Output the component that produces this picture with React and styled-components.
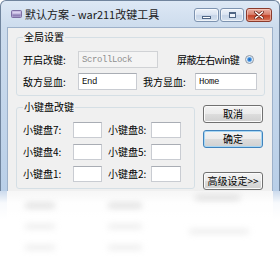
import React from "react"
import styled, { createGlobalStyle } from "styled-components"

const GlobalStyle = createGlobalStyle`
  html, body {
    margin: 0;
    padding: 0;
    background: #fff;
  }
  body {
    width: 280px;
    height: 270px;
    overflow: hidden;
    font-family: "Noto Sans CJK SC", "Liberation Sans", sans-serif;
  }
`

const AppIcon = () => (
  <svg width="11" height="10" viewBox="0 0 11 10">
    <rect x="0.5" y="1.5" width="10" height="7" rx="1" fill="#b7a9d6" stroke="#7d6fa3" />
    <rect x="1.5" y="2.5" width="8" height="2" fill="#d9d1ee" />
    <rect x="1.5" y="5.5" width="8" height="2" fill="#8d80b3" />
  </svg>
)

const Keypad = [
  ["小键盘7:", "小键盘8:"],
  ["小键盘4:", "小键盘5:"],
  ["小键盘1:", "小键盘2:"],
]

const App = () => {
  return (
    <Page>
      <GlobalStyle />
      <Window>
        <TitleBar>
          <AppIcon />
          <Title>默认方案 - war211改键工具</Title>
          <CaptionButtons>
            <CaptionButton w={25}>
              <MinGlyph />
            </CaptionButton>
            <CaptionButton w={24}>
              <MaxGlyph />
            </CaptionButton>
            <CloseButton>
              <svg width="10" height="8" viewBox="0 0 10 8">
                <path d="M1.5 1 L8.5 7 M8.5 1 L1.5 7" stroke="#6b2418" strokeWidth="3" strokeLinecap="round" />
                <path d="M1.5 1 L8.5 7 M8.5 1 L1.5 7" stroke="#fff" strokeWidth="1.6" strokeLinecap="round" />
              </svg>
            </CloseButton>
          </CaptionButtons>
        </TitleBar>

        <Client>
          <GlobalGroup>
            <Legend>全局设置</Legend>
            <Row>
              <Label w={55}>开启改键:</Label>
              <TextBox w={80} value="ScrollLock" disabled readOnly />
              <Label tight style={{ marginLeft: 19 }}>屏蔽左右win键</Label>
              <Radio />
            </Row>
            <Row>
              <Label w={55}>敌方显血:</Label>
              <TextBox w={59} value="End" readOnly />
              <Label w={52} style={{ marginLeft: 6 }}>我方显血:</Label>
              <TextBox w={62} value="Home" readOnly />
            </Row>
          </GlobalGroup>

          <BottomRow>
            <KeypadGroup>
              <Legend>小键盘改键</Legend>
              <KeyGrid>
                {Keypad.map(([a, b]) => (
                  <React.Fragment key={a}>
                    <Label>{a}</Label>
                    <TextBox w={29} h={16} readOnly value="" />
                    <Label>{b}</Label>
                    <TextBox w={30} h={16} readOnly value="" />
                  </React.Fragment>
                ))}
              </KeyGrid>
            </KeypadGroup>

            <ButtonColumn>
              <Button>取消</Button>
              <Button focused>确定</Button>
              <Button style={{ marginTop: 17 }}>高级设定&gt;&gt;</Button>
            </ButtonColumn>
          </BottomRow>
        </Client>
      </Window>

      <Fade>
        <Ghost />
        <Ghost />
        <Ghost style={{ marginTop: -8 }} />
        <Ghost faint />
        <Ghost faint />
        <span />
        <Ghost faint />
        <Ghost faint />
        <Ghost faint style={{ marginTop: -16, width: 60, marginLeft: -6 }} />
      </Fade>
    </Page>
  )
}

export default App

const Page = styled.div`
  width: 280px;
  height: 270px;
  display: flex;
  flex-direction: column;
  overflow: hidden;
`

const Window = styled.div`
  height: 191px;
  flex-shrink: 0;
  box-sizing: border-box;
  display: flex;
  flex-direction: column;
  border: 1px solid #70849d;
  border-bottom: none;
  border-radius: 6px 6px 0 0;
  background: linear-gradient(to bottom, #dde8f5 0, #cddced 26px, #b9cfe8 100%);
  overflow: hidden;
`

const TitleBar = styled.div`
  height: 26px;
  flex-shrink: 0;
  display: flex;
  align-items: center;
  padding: 0 7px 0 10px;
`

const Title = styled.div`
  margin-left: 3px;
  font-size: 11px;
  line-height: 12px;
  color: #1a1a1a;
  white-space: nowrap;
`

const CaptionButtons = styled.div`
  margin-left: auto;
  align-self: flex-start;
  margin-top: 7px;
  display: flex;
  gap: 1px;
`

const CaptionButton = styled.div`
  width: ${(p) => p.w}px;
  height: 14px;
  box-sizing: border-box;
  border: 1px solid #7d93b0;
  border-radius: 3px;
  background: linear-gradient(to bottom, #edf2f9 0%, #dbe5f2 45%, #c6d5e8 55%, #d5e1ef 100%);
  box-shadow: inset 0 0 0 1px rgba(255, 255, 255, 0.6);
  display: flex;
  align-items: center;
  justify-content: center;
`

const CloseButton = styled(CaptionButton).attrs({ w: 26 })`
  margin-left: 1px;
  border-color: #8a3a2c;
  background: linear-gradient(to bottom, #eab0a4 0%, #d9826f 45%, #c4452b 55%, #d77a5c 100%);
  box-shadow: inset 0 0 0 1px rgba(255, 220, 210, 0.5);
`

const MinGlyph = styled.div`
  width: 9px;
  height: 3px;
  margin-top: 4px;
  box-sizing: border-box;
  border: 1px solid #4f6685;
  background: #fff;
`

const MaxGlyph = styled.div`
  width: 7px;
  height: 6px;
  box-sizing: border-box;
  border: 1px solid #4f6685;
  border-top-width: 2px;
  background: #eef3fa;
`

const Client = styled.div`
  flex: 1;
  margin: 0 6px;
  box-sizing: border-box;
  border: 1px solid #9db1ca;
  border-bottom: none;
  background: #f0f0f0;
  display: flex;
  flex-direction: column;
`

const Group = styled.fieldset`
  margin: 0;
  min-width: 0;
  box-sizing: border-box;
  border: 1px solid #d5dfe5;
  border-radius: 3px;
  padding: 0 0 0 6px;
`

const GlobalGroup = styled(Group)`
  margin: 3px 7px 0 8px;
  padding-top: 8px;
  padding-bottom: 5px;
  display: flex;
  flex-direction: column;
  gap: 5px;
`

const KeypadGroup = styled(Group)`
  width: 179px;
  margin-left: 8px;
  padding-top: 9px;
  padding-bottom: 6px;
`

const Legend = styled.legend`
  padding: 0 1px;
  font-size: 10px;
  line-height: 12px;
  color: #000;
`

const Row = styled.div`
  display: flex;
  align-items: center;
  height: 17px;
`

const Label = styled.div`
  width: ${(p) => (p.w ? `${p.w}px` : "auto")};
  flex-shrink: 0;
  font-size: 10px;
  line-height: 16px;
  letter-spacing: ${(p) => (p.tight ? "-0.6px" : "0")};
  color: #000;
  white-space: nowrap;
`

const TextBox = styled.input`
  width: ${(p) => p.w}px;
  height: ${(p) => p.h || 17}px;
  box-sizing: border-box;
  margin: 0;
  padding: 0 3px;
  border: 1px solid #c9ccd2;
  border-top-color: #a9adb4;
  border-radius: 0;
  background: #fff;
  font-family: "Liberation Mono", monospace;
  font-size: 9px;
  letter-spacing: -0.4px;
  color: #111;
  outline: none;

  &:disabled {
    background: #f4f4f4;
    border-color: #d0d2d5;
    color: #8f8f8f;
  }
`

const Radio = styled.div`
  width: 9px;
  height: 9px;
  margin-left: 6px;
  box-sizing: border-box;
  border-radius: 50%;
  border: 1px solid #8d99a7;
  background: radial-gradient(circle, #1565c0 0, #3f8ddc 1.6px, #9cc7ee 2.4px, #e6edf5 3px);
`

const BottomRow = styled.div`
  margin-top: 5px;
  display: flex;
  align-items: flex-start;
`

const KeyGrid = styled.div`
  display: grid;
  grid-template-columns: 50px 29px 49px 30px;
  column-gap: 0;
  row-gap: 6px;
  align-items: center;

  & > :nth-child(4n + 3) {
    margin-left: 6px;
    width: 43px;
  }
`

const ButtonColumn = styled.div`
  width: 60px;
  margin-left: 8px;
  padding-top: 4px;
  display: flex;
  flex-direction: column;
  gap: 7px;
`

const Button = styled.button`
  width: 60px;
  height: 18px;
  padding: 0;
  box-sizing: border-box;
  border: 1px solid ${(p) => (p.focused ? "#3f83bd" : "#707070")};
  border-radius: 3px;
  background: linear-gradient(to bottom, #f3f3f3 0%, #ebebeb 50%, #dddddd 50%, #d0d0d0 100%);
  box-shadow: inset 0 0 0 1px ${(p) => (p.focused ? "#a7d6f3" : "#fbfbfb")};
  font-family: "Noto Sans CJK SC", sans-serif;
  font-size: 10px;
  line-height: 14px;
  color: #000;
  white-space: nowrap;
`

const Fade = styled.div`
  flex: 1;
  display: grid;
  grid-template-columns: 30px 34px 45px;
  column-gap: 53px;
  row-gap: 16px;
  align-content: start;
  padding: 12px 0 0 25px;
  background:
    linear-gradient(to bottom, rgba(255, 255, 255, 0.3) 0, rgba(255, 255, 255, 0.9) 12px, #fff 28px),
    linear-gradient(to right, #b6cbe5 7px, #f3f3f3 7px, #f3f3f3 273px, #b6cbe5 273px);
`

const Ghost = styled.div`
  height: 5px;
  border-radius: 3px;
  background: ${(p) => (p.faint ? "#ececec" : "#dcdcdc")};
  filter: blur(3px);
`
